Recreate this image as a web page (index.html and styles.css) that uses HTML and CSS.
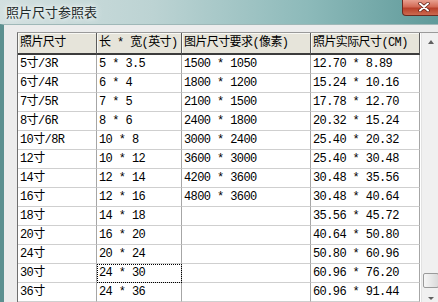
FILE: index.html
```html
<!DOCTYPE html>
<html lang="zh-CN">
<head>
<meta charset="utf-8">
<title>照片尺寸参照表</title>
<link rel="stylesheet" href="styles.css">
</head>
<body>
<div class="window">
  <div class="titlebar">
    <span class="title">照片尺寸参照表</span>
    <div class="close">
      <svg width="12" height="10" viewBox="0 0 12 10"><path d="M2 1.5 L10 8.5 M10 1.5 L2 8.5" stroke="#5a1a10" stroke-width="3.4" stroke-linecap="round"/><path d="M2 1.5 L10 8.5 M10 1.5 L2 8.5" stroke="#ffffff" stroke-width="2" stroke-linecap="round"/></svg>
    </div>
  </div>
  <div class="client">
    <div class="grid">
      <table class="sheet">
        <colgroup><col class="c1"><col class="c2"><col class="c3"><col class="c4"></colgroup>
        <thead>
          <tr><th>照片尺寸</th><th>长 * 宽(英寸)</th><th>图片尺寸要求(像素)</th><th>照片实际尺寸(CM)</th></tr>
        </thead>
        <tbody>
          <tr><td>5寸/3R</td><td>5 * 3.5</td><td>1500 * 1050</td><td>12.70 * 8.89</td></tr>
          <tr><td>6寸/4R</td><td>6 * 4</td><td>1800 * 1200</td><td>15.24 * 10.16</td></tr>
          <tr><td>7寸/5R</td><td>7 * 5</td><td>2100 * 1500</td><td>17.78 * 12.70</td></tr>
          <tr><td>8寸/6R</td><td>8 * 6</td><td>2400 * 1800</td><td>20.32 * 15.24</td></tr>
          <tr><td>10寸/8R</td><td>10 * 8</td><td>3000 * 2400</td><td>25.40 * 20.32</td></tr>
          <tr><td>12寸</td><td>10 * 12</td><td>3600 * 3000</td><td>25.40 * 30.48</td></tr>
          <tr><td>14寸</td><td>12 * 14</td><td>4200 * 3600</td><td>30.48 * 35.56</td></tr>
          <tr><td>16寸</td><td>12 * 16</td><td>4800 * 3600</td><td>30.48 * 40.64</td></tr>
          <tr><td>18寸</td><td>14 * 18</td><td></td><td>35.56 * 45.72</td></tr>
          <tr><td>20寸</td><td>16 * 20</td><td></td><td>40.64 * 50.80</td></tr>
          <tr><td>24寸</td><td>20 * 24</td><td></td><td>50.80 * 60.96</td></tr>
          <tr><td>30寸</td><td class="focus">24 * 30</td><td></td><td>60.96 * 76.20</td></tr>
          <tr><td>36寸</td><td>24 * 36</td><td></td><td>60.96 * 91.44</td></tr>
        </tbody>
      </table>
      <div class="sbar">
        <div class="sbtn"><span class="arrow-up"></span></div>
        <div class="track"><div class="thumb"></div></div>
        <div class="sbtn down"><span class="arrow-down"></span></div>
      </div>
    </div>
  </div>
</div>
</body>
</html>
```
FILE: styles.css
```css
html, body {
  margin: 0;
  padding: 0;
  background: #ececec;
}
.window {
  width: 438px;
  height: 302px;
  overflow: hidden;
  display: flex;
  flex-direction: column;
  background: linear-gradient(to right, #d3e0e0 0%, #bcd3d3 35%, #8dbaba 70%, #5f9a9a 100%);
}
.titlebar {
  height: 24px;
  flex: none;
  display: flex;
  align-items: flex-start;
}
.title {
  margin: 4px 0 0 6px;
  font-family: "Noto Sans CJK SC", sans-serif;
  font-size: 13px;
  line-height: 16px;
  color: #1e2a2a;
  text-shadow: 0 0 4px #ffffff, 0 0 8px rgba(255,255,255,0.8);
}
.close {
  margin-left: auto;
  margin-right: -7px;
  width: 43px;
  height: 16px;
  box-sizing: border-box;
  border: 1px solid #6b2a20;
  border-top: none;
  border-radius: 0 0 4px 4px;
  background: linear-gradient(to bottom, #e8a090 0%, #d26a55 45%, #b8402a 55%, #cc6a50 100%);
  display: flex;
  align-items: center;
  justify-content: center;
}
.close svg { display: block; margin-top: -1px; }
.client {
  flex: 1;
  display: flex;
  background: #ececec;
  border-left: 4px solid #5c9090;
  border-top: 1px solid #9fb8b8;
  padding: 7px 0 0 13px;
  min-height: 0;
}
.grid {
  display: flex;
  align-items: flex-start;
  border-left: 1px solid #6e6e6e;
  border-top: 1px solid #9a9a9a;
  background: #ffffff;
}
.sheet {
  border-collapse: separate;
  border-spacing: 0;
  table-layout: fixed;
  width: 402px;
  font-family: "Liberation Mono", "Noto Sans CJK SC", monospace;
  font-size: 12px;
  letter-spacing: -0.6px;
  color: #000000;
}
.c1 { width: 79px; }
.c2 { width: 85px; }
.c3 { width: 129px; }
.c4 { width: 109px; }
.sheet th, .sheet td {
  padding: 0 0 0 2px;
  text-align: left;
  white-space: nowrap;
  overflow: hidden;
  font-weight: normal;
}
.sheet th {
  height: 20px;
  line-height: 20px;
  background: #e6e4da;
  border-right: 1px solid #5a5a5a;
  border-bottom: 2px solid #3c3c3c;
  box-shadow: inset 1px 1px 0 #f8f8f4;
}
.sheet td {
  height: 18px;
  line-height: 18px;
  border-right: 1px solid #a6a6a6;
  border-bottom: 1px solid #cfcfcf;
}
.sheet td.focus {
  outline: 1px dotted #000000;
  outline-offset: -1px;
}
.sbar {
  align-self: stretch;
  width: 17px;
  margin-left: 1px;
  background: #f0f0f0;
  border-left: 1px solid #e2e2e2;
  display: flex;
  flex-direction: column;
}
.sbtn {
  height: 17px;
  flex: none;
  display: flex;
  align-items: center;
  justify-content: center;
}
.sbtn.down {
  height: 14px;
  align-items: flex-end;
  padding-bottom: 2px;
  box-sizing: border-box;
}
.arrow-up, .arrow-down {
  width: 0;
  height: 0;
  border-left: 3px solid transparent;
  border-right: 3px solid transparent;
}
.arrow-up { border-bottom: 4px solid #606060; }
.arrow-down { border-top: 3px solid #606060; }
.track {
  flex: 1;
  display: flex;
  flex-direction: column;
  justify-content: flex-end;
}
.thumb {
  height: 15px;
  margin: 0 0 0 1px;
  box-sizing: border-box;
  border: 1px solid #9a9a9a;
  border-radius: 2px;
  background: linear-gradient(to right, #f6f6f6, #dadada);
}
```
